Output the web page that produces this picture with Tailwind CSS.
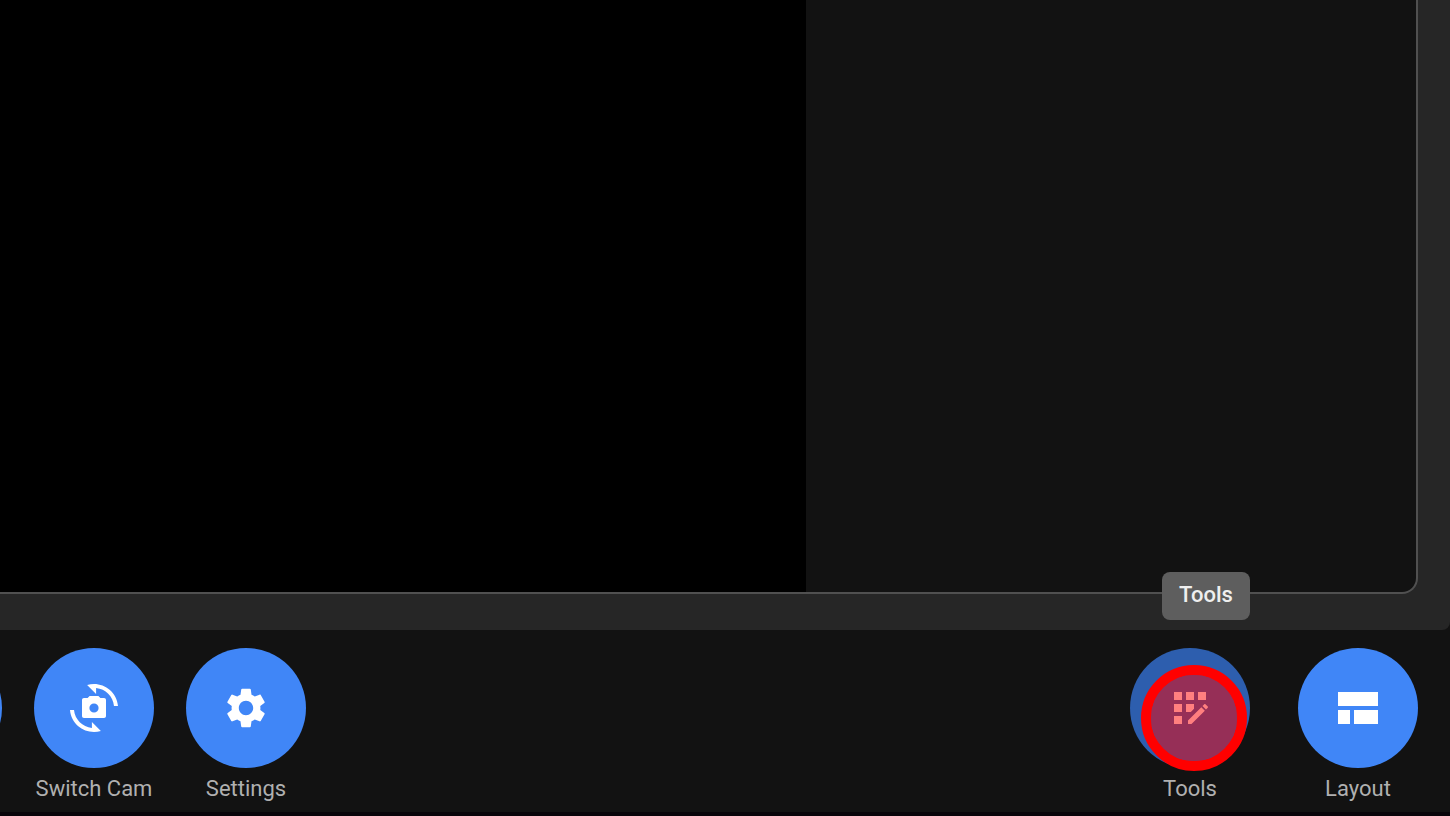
<!DOCTYPE html>
<html lang="en">
<head>
    <meta charset="UTF-8">
    <meta name="viewport" content="width=device-width, initial-scale=1.0">
    <title>Studio</title>

    <!-- Tailwind CSS -->
    <script src="https://cdn.jsdelivr.net/npm/@tailwindcss/browser@4"></script>
</head>
<body class="bg-[#121212] font-['Roboto',sans-serif]">
    <div class="flex flex-col h-screen overflow-hidden">
        <!-- Stage -->
        <main class="flex flex-1 min-h-0 bg-[#262626] pr-8 pb-9 rounded-br-lg">
            <div class="flex flex-1 bg-[#121212] border-r-2 border-b-2 border-[#505050] rounded-br-2xl overflow-hidden">
                <div class="flex-1 bg-black"></div>
                <div class="w-[610px]"></div>
            </div>
        </main>

        <!-- Toolbar -->
        <footer class="flex justify-between pt-[18px] pb-2.5 pr-8 border-b-4 border-[#08040a] text-[22px] leading-[26px] text-[#b0b0b0]">
            <div class="flex gap-8 -ml-[118px]">
                <div class="w-[120px]">
                    <button type="button" aria-label="Camera" class="block size-[120px] rounded-full bg-[#4086f7]"></button>
                </div>
                <div class="flex flex-col items-center gap-2 w-[120px]">
                    <button type="button" id="switch-cam" aria-labelledby="switch-cam-label" class="flex items-center justify-center size-[120px] rounded-full bg-[#4086f7] text-white">
                        <svg class="size-12" viewBox="0 0 24 24" fill="currentColor">
                            <path fill-rule="evenodd" d="M17 7h-1.800l-1-1H9.800l-1 1H7c-.6 0-1 .4-1 1v8c0 .6.4 1 1 1h10c.6 0 1-.4 1-1V8c0-.6-.4-1-1-1zM12 9.700a2.300 2.300 0 1 0 0 4.600a2.300 2.300 0 1 0 0-4.600z"/>
                            <path d="M8.570.510l4.480 4.480V2.040c4.720.470 8.480 4.230 8.950 8.950h2C23.340 3.020 15.490-1.590 8.570.510zM10.950 21.960C6.230 21.490 2.470 17.730 2 13.010H0c.660 7.970 8.510 12.580 15.430 10.480l-4.480-4.480v2.950z"/>
                        </svg>
                    </button>
                    <label id="switch-cam-label" for="switch-cam" class="whitespace-nowrap">Switch Cam</label>
                </div>
                <div class="flex flex-col items-center gap-2 w-[120px]">
                    <button type="button" id="settings" aria-labelledby="settings-label" class="flex items-center justify-center size-[120px] rounded-full bg-[#4086f7] text-white">
                        <svg class="size-12" viewBox="0 0 24 24" fill="currentColor">
                            <path d="M19.140 12.940c.040-.300.060-.610.060-.940 0-.320-.020-.640-.070-.940l2.030-1.580c.180-.140.230-.410.120-.610l-1.920-3.320c-.120-.220-.370-.290-.590-.220l-2.390.960c-.500-.380-1.030-.700-1.620-.940l-.360-2.540c-.040-.240-.240-.410-.480-.410h-3.840c-.240 0-.430.170-.470.410l-.360 2.540c-.590.240-1.130.570-1.620.940l-2.390-.960c-.220-.080-.470 0-.590.220L2.740 8.870c-.120.210-.080.470.120.610l2.030 1.580c-.050.300-.090.630-.090.940s.020.640.070.940l-2.030 1.580c-.180.140-.230.410-.120.610l1.920 3.320c.120.220.370.290.590.220l2.390-.960c.500.380 1.030.700 1.620.940l.360 2.540c.050.240.240.410.480.410h3.840c.240 0 .440-.170.470-.410l.360-2.540c.590-.240 1.130-.560 1.620-.940l2.390.960c.220.080.470 0 .590-.220l1.920-3.320c.120-.220.070-.470-.120-.610l-2.010-1.580zM12 15.600c-1.980 0-3.600-1.620-3.600-3.600s1.620-3.600 3.600-3.600 3.600 1.620 3.600 3.600-1.620 3.600-3.600 3.600z"/>
                        </svg>
                    </button>
                    <label id="settings-label" for="settings">Settings</label>
                </div>
            </div>

            <div class="flex gap-12">
                <div class="relative flex flex-col items-center gap-2 w-[120px]">
                    <button type="button" id="tools" aria-labelledby="tools-label" class="flex items-center justify-center size-[120px] rounded-full bg-[#2d5eae] text-white">
                        <svg class="size-12" viewBox="0 0 24 24" fill="currentColor">
                            <path d="M4 4h4v4H4zM10 4h4v4h-4zM16 4h4v4h-4zM4 10h4v4H4zM4 16h4v4H4zM14 12.420V10h-4v4h2.420zM11 18.250V20h1.750l6.670-6.670-1.750-1.750zM20.880 11.290l-1.170-1.170c-.160-.160-.420-.160-.580 0l-.880.880L20 12.750l.880-.880c.160-.160.160-.420 0-.580z"/>
                        </svg>
                    </button>
                    <label id="tools-label" for="tools">Tools</label>
                    <!-- Tooltip -->
                    <div role="tooltip" class="absolute right-0 -top-[76px] flex items-center justify-center w-[88px] h-12 pb-0.5 rounded-lg bg-[#5e5e5e] font-medium text-[#efefef]">Tools</div>
                    <!-- Click marker -->
                    <div class="absolute left-[11px] top-[17px] size-[106px] rounded-full border-10 border-[#ff0000] bg-[#ff0000]/50 bg-clip-padding pointer-events-none"></div>
                </div>
                <div class="flex flex-col items-center gap-2 w-[120px]">
                    <button type="button" id="layout" aria-labelledby="layout-label" class="flex items-center justify-center size-[120px] rounded-full bg-[#4086f7] text-white">
                        <svg class="size-12" viewBox="0 0 48 48" fill="currentColor">
                            <path d="M4 8h40v14H4zM4 26h12v14H4zM20 26h24v14H20z"/>
                        </svg>
                    </button>
                    <label id="layout-label" for="layout">Layout</label>
                </div>
            </div>
        </footer>
    </div>
</body>
</html>
